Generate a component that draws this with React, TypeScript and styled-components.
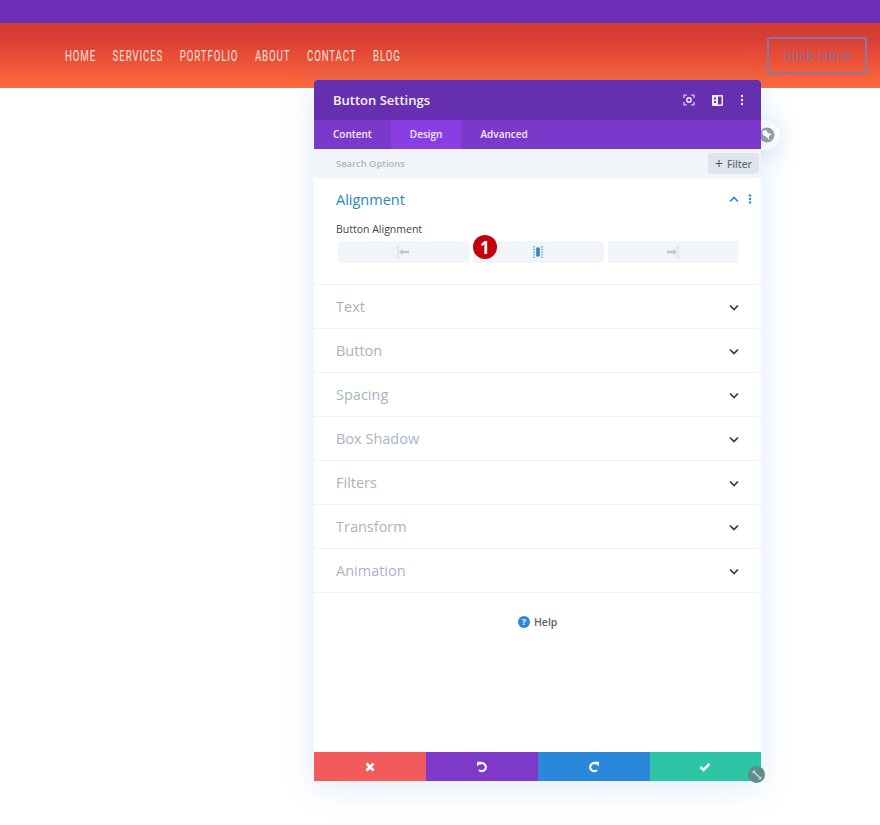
import styled, { createGlobalStyle } from "styled-components";

const GlobalStyle = createGlobalStyle`
  html, body {
    margin: 0;
    padding: 0;
    background: #fff;
  }
  * {
    box-sizing: border-box;
  }
`;

const navItems = ["HOME", "SERVICES", "PORTFOLIO", "ABOUT", "CONTACT", "BLOG"];
const sections = ["Text", "Button", "Spacing", "Box Shadow", "Filters", "Transform", "Animation"];

const Chevron = ({ up }: { up?: boolean }) => (
  <svg width="10" height="7" viewBox="0 0 10 7" fill="none">
    <path
      d={up ? "M1 5.5 L5 1.5 L9 5.5" : "M1 1.5 L5 5.5 L9 1.5"}
      stroke={up ? "#2b87c9" : "#333b47"}
      strokeWidth="1.7"
    />
  </svg>
);

const AlignIcon = ({ side }: { side: "left" | "center" | "right" }) => {
  if (side === "center") {
    return (
      <svg width="14" height="14" viewBox="0 0 14 14">
        <path d="M3 1 V13 M11 1 V13" stroke="#2b87c9" strokeWidth="1.1" strokeDasharray="1.5 1.2" />
        <rect x="5.2" y="2.5" width="3.6" height="9" fill="#2b87c9" />
      </svg>
    );
  }
  const flip = side === "right" ? "translate(14 0) scale(-1 1)" : undefined;
  return (
    <svg width="14" height="14" viewBox="0 0 14 14">
      <g transform={flip}>
        <path d="M2 1 V13" stroke="#bcc6d2" strokeWidth="1" strokeDasharray="1.5 1.2" />
        <path d="M3 7 L6.5 4 V5.8 H13 V8.2 H6.5 V10 Z" fill="#bcc6d2" />
      </g>
    </svg>
  );
};

const App = () => {
  return (
    <>
      <GlobalStyle />
      <Page>
        <TopBar />
        <Header>
          <Nav>
            {navItems.map((item) => (
              <NavLink key={item}>{item}</NavLink>
            ))}
          </Nav>
          <CtaButton>Click Here</CtaButton>
        </Header>

        <GlobeBubble>
          <svg width="16" height="16" viewBox="0 0 16 16">
            <circle cx="8" cy="8" r="7.5" fill="#9a9da3" />
            <path d="M3 4 L7 3 L9 6 L13 7 L10 9 L10 13 L7.5 10 L4 8 Z" fill="#fff" />
          </svg>
        </GlobeBubble>

        <Modal>
          <ModalHeader>
            <ModalTitle>Button Settings</ModalTitle>
            <HeaderIcons>
              <svg width="12" height="12" viewBox="0 0 12 12" fill="none">
                <path d="M1 4 V1 H4 M8 1 H11 V4 M11 8 V11 H8 M4 11 H1 V8" stroke="#e9dcfa" strokeWidth="1.2" />
                <rect x="4" y="4" width="4" height="4" rx="1" stroke="#fff" strokeWidth="1.4" />
              </svg>
              <svg width="11" height="11" viewBox="0 0 11 11">
                <path fillRule="evenodd" d="M1 0 H10 A1 1 0 0 1 11 1 V10 A1 1 0 0 1 10 11 H1 A1 1 0 0 1 0 10 V1 A1 1 0 0 1 1 0 Z M6 1.5 V9.5 H9.5 V1.5 Z M2 2.5 V4.5 H4 V2.5 Z M2 6 V8 H4 V6 Z" fill="#f3ecfd" />
              </svg>
              <svg width="4" height="12" viewBox="0 0 4 12" fill="#f3ecfd">
                <circle cx="2" cy="2" r="1.2" />
                <circle cx="2" cy="6" r="1.2" />
                <circle cx="2" cy="10" r="1.2" />
              </svg>
            </HeaderIcons>
          </ModalHeader>

          <Tabs>
            <Tab>Content</Tab>
            <Tab $active>Design</Tab>
            <Tab>Advanced</Tab>
          </Tabs>

          <SearchBar>
            <SearchText>Search Options</SearchText>
            <FilterButton>
              <FilterPlus>+</FilterPlus> Filter
            </FilterButton>
          </SearchBar>

          <Body>
            <OpenSection>
              <SectionHead>
                <OpenTitle>Alignment</OpenTitle>
                <SectionControls>
                  <Chevron up />
                  <svg width="4" height="10" viewBox="0 0 4 10" fill="#2b87c9">
                    <circle cx="2" cy="1.5" r="1.2" />
                    <circle cx="2" cy="5" r="1.2" />
                    <circle cx="2" cy="8.5" r="1.2" />
                  </svg>
                </SectionControls>
              </SectionHead>
              <FieldLabel>Button Alignment</FieldLabel>
              <AlignRow>
                <AlignOption>
                  <AlignIcon side="left" />
                </AlignOption>
                <AlignOption>
                  <AlignIcon side="center" />
                  <Badge>1</Badge>
                </AlignOption>
                <AlignOption>
                  <AlignIcon side="right" />
                </AlignOption>
              </AlignRow>
            </OpenSection>

            {sections.map((name) => (
              <Section key={name}>
                <SectionTitle>{name}</SectionTitle>
                <ChevronSlot>
                  <Chevron />
                </ChevronSlot>
              </Section>
            ))}

            <HelpRow>
              <HelpIcon>?</HelpIcon>
              <HelpText>Help</HelpText>
            </HelpRow>
          </Body>

          <Footer>
            <FooterButton $bg="#f25a5b">
              <svg width="10" height="10" viewBox="0 0 10 10">
                <path d="M1.5 1.5 L8.5 8.5 M8.5 1.5 L1.5 8.5" stroke="#fff" strokeWidth="2.6" />
              </svg>
            </FooterButton>
            <FooterButton $bg="#7e39c9">
              <svg width="12" height="12" viewBox="0 0 12 12" fill="none">
                <path d="M3.2 3.1 A4 4 0 1 1 3 9" stroke="#fff" strokeWidth="2.2" />
                <path d="M1 0.8 H5.8 L1 5.6 Z" fill="#fff" />
              </svg>
            </FooterButton>
            <FooterButton $bg="#2b87da">
              <svg width="12" height="12" viewBox="0 0 12 12" fill="none">
                <path d="M8.8 3.1 A4 4 0 1 0 9 9" stroke="#fff" strokeWidth="2.2" />
                <path d="M11 0.8 H6.2 L11 5.6 Z" fill="#fff" />
              </svg>
            </FooterButton>
            <FooterButton $bg="#2ec4a6">
              <svg width="12" height="10" viewBox="0 0 12 10" fill="none">
                <path d="M1.5 5 L4.6 8 L10.5 1.8" stroke="#fff" strokeWidth="2.6" />
              </svg>
            </FooterButton>
          </Footer>

          <ResizeHandle>
            <svg width="10" height="10" viewBox="0 0 10 10" fill="none">
              <path d="M2 2 L8 8" stroke="#d5e3e2" strokeWidth="1.3" />
              <path d="M1 3.5 V1 H3.5 M9 6.5 V9 H6.5" stroke="#d5e3e2" strokeWidth="1" />
            </svg>
          </ResizeHandle>
        </Modal>
      </Page>
    </>
  );
};

export default App;

const Page = styled.div`
  position: relative;
  width: 880px;
  height: 825px;
  overflow: hidden;
  background: #fff;
`;

const TopBar = styled.div`
  height: 23px;
  background: #6c2eb5;
`;

const Header = styled.header`
  height: 65px;
  padding: 0 13px 0 65px;
  display: flex;
  align-items: center;
  justify-content: space-between;
  background: linear-gradient(180deg, #d33a35 0%, #d83e35 25%, #ff6b3d 100%);
`;

/* no condensed family installed, so the row is squeezed to match Oswald's widths */
const Nav = styled.nav`
  display: flex;
  gap: 24px;
  transform: scaleX(0.69);
  transform-origin: left center;
`;

const NavLink = styled.a`
  font-family: "Roboto", sans-serif;
  font-size: 14px;
  letter-spacing: 1.3px;
  color: #fbe1d8;
`;

const CtaButton = styled.button`
  width: 100px;
  height: 37px;
  margin: 0;
  padding: 0;
  background: transparent;
  border: 2px solid #8c75a5;
  border-radius: 3px;
  font-family: "Open Sans", sans-serif;
  font-size: 14.5px;
  color: #8c6f9c;
`;

const GlobeBubble = styled.div`
  position: absolute;
  left: 745px;
  top: 120px;
  width: 35px;
  height: 30px;
  padding-left: 14px;
  display: flex;
  align-items: center;
  background: #fff;
  border-radius: 15px;
  box-shadow: 0 4px 24px rgba(43, 135, 218, 0.2);
`;

const Modal = styled.div`
  position: absolute;
  left: 314px;
  top: 80px;
  width: 447.4px;
  height: 701px;
  display: flex;
  flex-direction: column;
  background: #fff;
  border-radius: 3px;
  box-shadow: 0 6px 34px rgba(43, 135, 218, 0.16);
  font-family: "Open Sans", sans-serif;
`;

const ModalHeader = styled.div`
  height: 40px;
  padding: 0 17px 0 19px;
  display: flex;
  align-items: center;
  justify-content: space-between;
  background: #652fb0;
  border-radius: 3px 3px 0 0;
`;

const ModalTitle = styled.div`
  font-size: 13px;
  font-weight: 600;
  color: #f6f1fd;
`;

const HeaderIcons = styled.div`
  display: flex;
  align-items: center;
  gap: 17px;
`;

const Tabs = styled.div`
  height: 29px;
  display: flex;
  background: #7b39cc;
`;

const Tab = styled.div<{ $active?: boolean }>`
  padding: 0 19px 1px;
  display: flex;
  align-items: center;
  font-size: 10px;
  font-weight: 600;
  color: #f3ecfb;
  background: ${(p) => (p.$active ? "#883ee3" : "transparent")};
`;

const SearchBar = styled.div`
  height: 29px;
  padding: 0 2.5px 0 22px;
  display: flex;
  align-items: center;
  justify-content: space-between;
  background: #f1f5f9;
`;

const SearchText = styled.span`
  font-size: 9.4px;
  font-weight: 600;
  color: #a9b4c2;
`;

const FilterButton = styled.div`
  width: 51px;
  height: 21px;
  display: flex;
  align-items: center;
  justify-content: center;
  gap: 4px;
  background: #dfe5ec;
  border-radius: 3px;
  font-size: 10px;
  font-weight: 600;
  color: #66717f;
`;

const FilterPlus = styled.span`
  font-size: 14px;
  font-weight: 400;
  line-height: 1;
  color: #4a5462;
`;

const Body = styled.div`
  flex: 1;
  display: flex;
  flex-direction: column;
`;

const OpenSection = styled.div`
  height: 107px;
  padding: 10px 0 0 22px;
  border-bottom: 1px solid #f0f2f5;
`;

const SectionHead = styled.div`
  height: 22px;
  padding-right: 9px;
  display: flex;
  align-items: center;
  justify-content: space-between;
`;

const OpenTitle = styled.div`
  font-size: 14.5px;
  color: #2b87b9;
`;

const SectionControls = styled.div`
  display: flex;
  align-items: center;
  gap: 9px;
`;

const FieldLabel = styled.div`
  margin-top: 12px;
  height: 15px;
  line-height: 15px;
  font-size: 10.5px;
  font-weight: 500;
  color: #3e4550;
`;

const AlignRow = styled.div`
  margin: 4px 23px 0 2px;
  display: grid;
  grid-template-columns: repeat(3, 1fr);
  gap: 4px;
`;

const AlignOption = styled.div`
  position: relative;
  height: 22px;
  display: flex;
  align-items: center;
  justify-content: center;
  background: #f1f5f9;
  border-radius: 2px;
`;

const Badge = styled.div`
  position: absolute;
  left: 0;
  top: -6px;
  width: 24px;
  height: 24px;
  display: flex;
  align-items: center;
  justify-content: center;
  border-radius: 50%;
  background: #c4000c;
  font-family: "Open Sans", sans-serif;
  font-size: 17px;
  font-weight: 700;
  color: #fff;
`;

const Section = styled.div`
  height: 44px;
  padding: 0 22px 0 22px;
  display: flex;
  align-items: center;
  justify-content: space-between;
  border-bottom: 1px solid #f0f2f5;
`;

const SectionTitle = styled.div`
  font-size: 14.5px;
  color: #a9b4c2;
`;

const ChevronSlot = styled.div`
  margin-top: 1px;
  display: flex;
  align-items: center;
`;

const HelpRow = styled.div`
  margin-top: 21px;
  height: 15px;
  display: flex;
  align-items: center;
  justify-content: center;
  gap: 4px;
`;

const HelpIcon = styled.div`
  width: 12px;
  height: 12px;
  display: flex;
  align-items: center;
  justify-content: center;
  border-radius: 50%;
  background: #2b87da;
  font-size: 9px;
  font-weight: 700;
  color: #fff;
`;

const HelpText = styled.span`
  font-size: 10.5px;
  font-weight: 600;
  color: #59626e;
`;

const Footer = styled.div`
  height: 29px;
  display: grid;
  grid-template-columns: repeat(4, 1fr);
`;

const FooterButton = styled.div<{ $bg: string }>`
  display: flex;
  align-items: center;
  justify-content: center;
  background: ${(p) => p.$bg};
`;

const ResizeHandle = styled.div`
  position: absolute;
  right: -4px;
  bottom: -2px;
  width: 17px;
  height: 17px;
  display: flex;
  align-items: center;
  justify-content: center;
  border-radius: 50%;
  background: #5f8d8d;
`;
